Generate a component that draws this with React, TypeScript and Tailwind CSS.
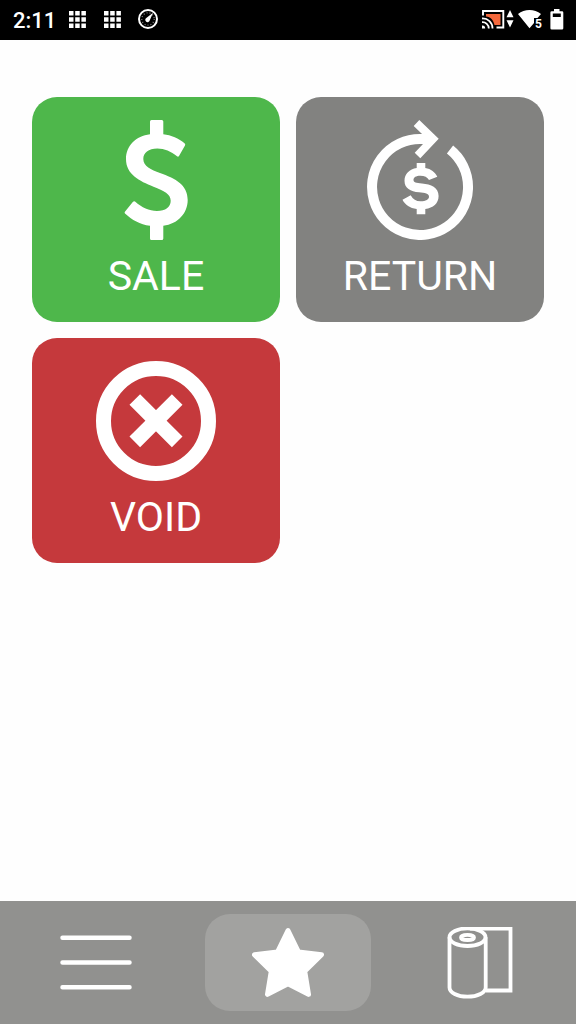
import React from 'react';

interface IconProps {
  className?: string;
}

const DollarIcon: React.FC<IconProps> = ({ className }) => (
  <svg viewBox="0 0 120 120" className={className} fill="currentColor" aria-hidden="true">
    <path d="M54 1.5Q54 0 55.500 0H65.800Q67.300 0 67.300 1.500V14.300C75 15 83 18.500 88.500 23.200Q89.700 24.200 89 25.500L83 36Q82.200 37.200 81 36.300C75 31.500 68.500 28.500 61.300 28.500C52.500 28.500 47.300 33 47.300 39C47.300 46.500 55 49.500 64 53C79 58.500 91.700 64.500 91.700 80C91.700 93 82 104 67.300 105.800V118.500Q67.300 120 65.800 120H55.500Q54 120 54 118.500V105.800C44 104.500 36 100 29 93.500Q28.200 92.800 28.900 91.800L37 81.800Q38 80.700 39 81.500C46 87.500 53 91 61 91C69.500 91 74.700 87 74.700 80.700C74.700 74 68 71 57.500 66.700C43.500 61 30 54.500 30 39C30 26 40 15.800 54 14.300Z" />
  </svg>
);

const RefundIcon: React.FC<IconProps> = ({ className }) => (
  <svg viewBox="0 0 120 120" className={className} fill="currentColor" aria-hidden="true">
    <path d="M90 29.500A48 48 0 1 1 60 19H68" fill="none" stroke="currentColor" strokeWidth="10" />
    <path d="M59.300 0L78.700 18.700L60.300 38.300L54.700 32.700L63 24L62.300 14.300L53.700 6Z" />
    <path d="M56.700 43H65.300V48C71 49 75 52 77.300 56.700L69 60C67.500 57.200 64.500 55.700 60.300 55.700C56 55.700 53.500 57.300 53.500 59.800C53.500 62.500 56 63 62 63.600C71 64.500 78.600 67.500 78.600 76C78.600 83.500 73 88 65.300 89V94.300H56.700V89C50 88 45.300 85 42.500 79.700L50.700 75.200C53 79.200 56 81.200 60.500 81.200C66 81.200 69 79.400 69 76.700C69 73.500 65 73 59 72.300C50.500 71.300 44.500 68.500 44.500 60.700C44.500 54 49.500 49 56.700 48Z" />
  </svg>
);

const VoidIcon: React.FC<IconProps> = ({ className }) => (
  <svg viewBox="0 0 120 120" className={className} fill="none" stroke="currentColor" aria-hidden="true">
    <circle cx="60" cy="60" r="52.500" strokeWidth="15" />
    <path d="M38.800 38.500L81.200 80.900M81.200 38.500L38.800 80.900" strokeWidth="15" />
  </svg>
);

const MenuIcon: React.FC<IconProps> = ({ className }) => (
  <svg viewBox="0 0 72 72" className={className} stroke="currentColor" strokeWidth="4.500" strokeLinecap="round" aria-hidden="true">
    <path d="M2.500 10.800H69.500M2.500 35.500H69.500M2.500 60.200H69.500" />
  </svg>
);

const StarIcon: React.FC<IconProps> = ({ className }) => (
  <svg viewBox="0 0 72 72" className={className} fill="currentColor" stroke="currentColor" strokeWidth="5" strokeLinejoin="round" aria-hidden="true">
    <path d="M36 3.500L46.500 25L69.500 27.800L52.700 44.200L56.500 67.400L36 56.800L15.500 67.400L19.300 44.200L2.500 27.800L25.500 25Z" />
  </svg>
);

const PaperRollIcon: React.FC<IconProps> = ({ className }) => (
  <svg viewBox="0 0 72 72" className={className} fill="none" stroke="currentColor" strokeWidth="3.800" aria-hidden="true">
    <ellipse cx="23.500" cy="10.200" rx="18" ry="8.800" />
    <ellipse cx="23.500" cy="10.400" rx="6.500" ry="2.600" />
    <path d="M5.500 10.200V60.500C5.500 65.500 13.300 69.700 23.500 69.700C33.700 69.700 41.700 65.500 41.700 60.500V10.200" />
    <path d="M26 1.700H66.500V63.500H42" />
  </svg>
);

const AppsIcon: React.FC<IconProps> = ({ className }) => (
  <svg viewBox="0 0 17 17" className={className} fill="currentColor" aria-hidden="true">
    <path d="M0 0h4.500v4.500H0zM6.200 0h4.500v4.500H6.200zM12.400 0h4.500v4.500h-4.500zM0 6.200h4.500v4.500H0zM6.200 6.200h4.500v4.500H6.200zM12.400 6.200h4.500v4.500h-4.500zM0 12.400h4.500v4.500H0zM6.200 12.400h4.500v4.500H6.200zM12.400 12.400h4.500v4.500h-4.500z" />
  </svg>
);

const GaugeIcon: React.FC<IconProps> = ({ className }) => (
  <svg viewBox="0 0 20 20" className={className} fill="none" stroke="currentColor" aria-hidden="true">
    <circle cx="10" cy="10" r="9" strokeWidth="2" />
    <circle cx="10" cy="10" r="6.200" strokeWidth="1.300" strokeDasharray="1 2" opacity="0.5" />
    <path d="M15 3.800L11.800 11.300A2.300 2.300 0 1 1 8.300 8.900Z" fill="currentColor" stroke="none" />
  </svg>
);

const CastIcon: React.FC<IconProps> = ({ className }) => (
  <svg viewBox="0 0 23 19" className={className} fill="none" stroke="currentColor" aria-hidden="true">
    <path d="M4 4H18.500V15H12.500C11.500 10 8.500 7 4 6.500Z" fill="#f4683c" stroke="none" />
    <path d="M1 5.500V1H21.300V17.500H14.500" strokeWidth="1.900" />
    <path d="M0 8.500A9.800 9.800 0 0 1 10.500 18.500M0 12.200A6.300 6.300 0 0 1 6.800 18.500" strokeWidth="1.800" />
    <path d="M0 15.500A3 3 0 0 1 3.200 18.500H0Z" fill="currentColor" stroke="none" />
  </svg>
);

const DataArrowsIcon: React.FC<IconProps> = ({ className }) => (
  <svg viewBox="0 0 8 18" className={className} fill="currentColor" aria-hidden="true">
    <path d="M4 0L7.500 7.300H.5ZM4 17.500L.5 10.200H7.500Z" />
  </svg>
);

const WifiIcon: React.FC<IconProps> = ({ className }) => (
  <svg viewBox="0 0 24 19" className={className} fill="currentColor" aria-hidden="true">
    <path d="M0 4C6.500-1.200 16.500-1.200 23 4L19.500 8H16V13L11.500 18.300Z" />
  </svg>
);

const BatteryIcon: React.FC<IconProps> = ({ className }) => (
  <svg viewBox="0 0 14 21" className={className} fill="currentColor" aria-hidden="true">
    <path fillRule="evenodd" d="M4 0H9.500V2.300H12Q13.300 2.300 13.300 3.600V19.300Q13.300 20.600 12 20.600H1.700Q.4 20.600 .4 19.300V3.600Q.4 2.300 1.700 2.300H4ZM2.800 4.500V8H10.800V4.500Z" />
  </svg>
);

const actions = [
  { key: 'sale', label: 'SALE', color: 'bg-[#4eb74b]', Icon: DollarIcon },
  { key: 'return', label: 'RETURN', color: 'bg-[#828280]', Icon: RefundIcon },
  { key: 'void', label: 'VOID', color: 'bg-[#c5393c]', Icon: VoidIcon },
];

const tabs = [
  { key: 'menu', label: 'Menu', active: false, Icon: MenuIcon },
  { key: 'favorites', label: 'Favorites', active: true, Icon: StarIcon },
  { key: 'receipts', label: 'Receipts', active: false, Icon: PaperRollIcon },
];

const StatusBar: React.FC = () => (
  <header className="flex h-10 items-center justify-between bg-black px-3 pb-[2px] text-white">
    <div className="flex items-center">
      <span className="w-14 pt-[3px] pl-px text-[22px] leading-8 font-medium">2:11</span>
      <AppsIcon className="ml-px h-[17px] w-[17px]" />
      <AppsIcon className="ml-[18px] h-[17px] w-[17px]" />
      <GaugeIcon className="ml-[17px] size-5" />
    </div>
    <div className="flex items-center">
      <CastIcon className="h-[19px] w-[23px]" />
      <DataArrowsIcon className="ml-px h-[18px] w-2" />
      <div className="relative ml-1 h-[19px] w-6">
        <WifiIcon className="h-[19px] w-6" />
        <span className="absolute right-0 -bottom-px text-xs leading-3 font-bold">5</span>
      </div>
      <BatteryIcon className="ml-2 h-[21px] w-[14px]" />
    </div>
  </header>
);

export default function App() {
  return (
    <div className="flex min-h-screen flex-col bg-[#fefefe] font-[Roboto,sans-serif]">
      <StatusBar />

      <main className="grid flex-1 grid-cols-2 content-start gap-4 px-8 pt-[57px] pb-8">
        {actions.map(({ key, label, color, Icon }) => (
          <button
            key={key}
            type="button"
            className={`flex flex-col items-center rounded-[25px] pt-[23px] pb-[22px] text-white ${color}`}
          >
            <Icon className="size-[120px]" />
            <span className="mt-3 text-[41px] leading-[48px]">{label}</span>
          </button>
        ))}
      </main>

      <nav className="grid grid-cols-3 bg-[#91918f] py-[13px]">
        {tabs.map(({ key, label, active, Icon }) => (
          <button
            key={key}
            type="button"
            aria-label={label}
            className={`mx-[13px] flex h-[97px] items-center justify-center rounded-[25px] text-white ${active ? 'bg-[#a2a2a0]' : ''}`}
          >
            <Icon className="size-[72px]" />
          </button>
        ))}
      </nav>
    </div>
  );
}
